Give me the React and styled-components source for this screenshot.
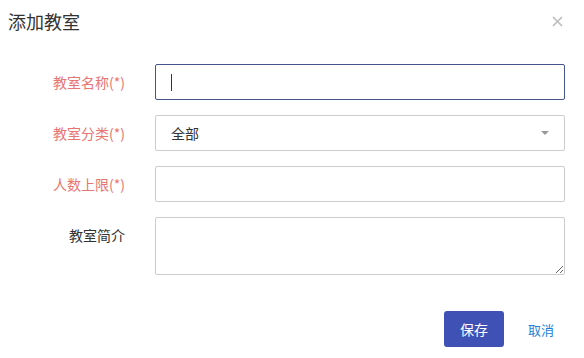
import styled, { createGlobalStyle } from 'styled-components';

const Global = createGlobalStyle`
    html, body {
        margin: 0;
        padding: 0;
        background: #fff;
    }
    body {
        font-family: 'Noto Sans CJK SC', 'Noto Sans', sans-serif;
        color: #333;
    }
    * {
        box-sizing: border-box;
    }
`

const Dialog = styled.div`
    width: 584px;
    height: 358px;
    display: flex;
    flex-direction: column;
    background: #fff;
`
const Header = styled.div`
    display: flex;
    align-items: center;
    justify-content: space-between;
    height: 42px;
    padding: 0 20px 0 8px;
`
const Title = styled.h4`
    margin: 0;
    font-size: 18px;
    font-weight: 400;
    color: #333;
`
const Close = styled.button`
    border: none;
    background: none;
    padding: 0;
    width: 14px;
    height: 14px;
    display: flex;
    align-items: center;
    justify-content: center;
    cursor: pointer;
`
const Form = styled.form`
    display: grid;
    grid-template-columns: 125px 1fr;
    column-gap: 30px;
    row-gap: 15px;
    padding: 22px 19px 0 0;
`
const Label = styled.label`
    text-align: right;
    font-size: 14px;
    line-height: 36px;
    color: ${p => (p.required ? '#e87571' : '#333')};
`
const Field = styled.div`
    position: relative;
`
const Input = styled.input`
    display: block;
    width: 100%;
    height: 36px;
    padding: 0 15px;
    font: inherit;
    font-size: 14px;
    color: #333;
    border: 1px solid ${p => (p.focused ? '#47558f' : '#ccc')};
    border-radius: 2px;
    outline: none;
    background: #fff;
`
const Caret = styled.span`
    position: absolute;
    left: 16px;
    top: 10px;
    width: 1px;
    height: 17px;
    background: #333;
`
const Select = styled.select`
    display: block;
    width: 100%;
    height: 36px;
    padding: 0 15px;
    font: inherit;
    font-size: 14px;
    color: #333;
    border: 1px solid #ccc;
    border-radius: 2px;
    outline: none;
    background: #fff;
    appearance: none;
`
const Arrow = styled.svg`
    position: absolute;
    right: 16px;
    top: 16px;
    pointer-events: none;
`
const TextArea = styled.textarea`
    display: block;
    width: 100%;
    height: 58px;
    padding: 6px 15px;
    font: inherit;
    font-size: 14px;
    border: 1px solid #ccc;
    border-radius: 2px;
    outline: none;
`
const Footer = styled.div`
    display: flex;
    justify-content: flex-end;
    align-items: center;
    gap: 12px;
    padding: 36px 18px 0 0;
`
const Button = styled.button`
    height: 36px;
    min-width: ${p => (p.primary ? '60px' : '0')};
    padding: 0 12px;
    font-family: inherit;
    font-size: ${p => (p.primary ? '14px' : '13px')};
    border: none;
    border-radius: 3px;
    cursor: pointer;
    background: ${p => (p.primary ? '#3f51b5' : 'transparent')};
    color: ${p => (p.primary ? '#fff' : '#1e7fd9')};
`

const App = () => {
    return (
        <>
        <Global />
        <Dialog>
            <Header>
                <Title>添加教室</Title>
                <Close aria-label="关闭">
                    <svg width="11" height="11" viewBox="0 0 11 11">
                        <path d="M1 1 L10 10 M10 1 L1 10" stroke="#bdbdbd" strokeWidth="1.7" />
                    </svg>
                </Close>
            </Header>
            <Form>
                <Label required>教室名称(*)</Label>
                <Field>
                    <Input focused />
                    <Caret />
                </Field>

                <Label required>教室分类(*)</Label>
                <Field>
                    <Select defaultValue="all">
                        <option value="all">全部</option>
                    </Select>
                    <Arrow width="8" height="4" viewBox="0 0 8 4">
                        <path d="M0 0 L8 0 L4 4 Z" fill="#999" />
                    </Arrow>
                </Field>

                <Label required>人数上限(*)</Label>
                <Field>
                    <Input />
                </Field>

                <Label>教室简介</Label>
                <Field>
                    <TextArea />
                </Field>
            </Form>
            <Footer>
                <Button primary>保存</Button>
                <Button>取消</Button>
            </Footer>
        </Dialog>
        </>
    );
}

export default App;
